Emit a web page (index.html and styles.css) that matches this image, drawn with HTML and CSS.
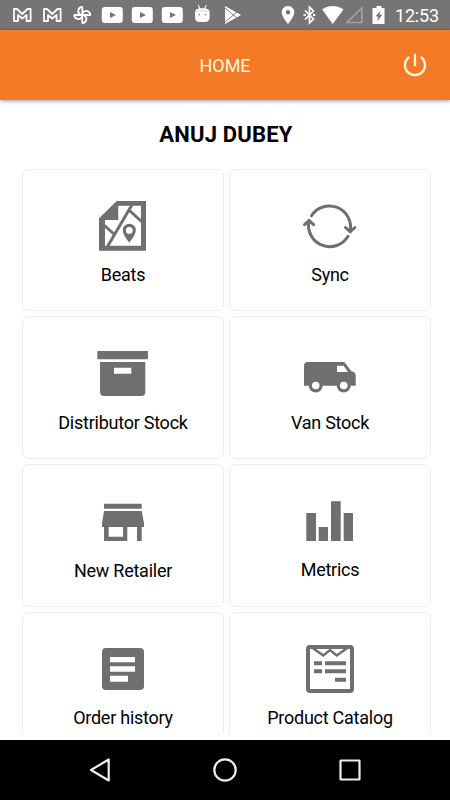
FILE: index.html
```html
<!DOCTYPE html>
<html lang="en">
<head>
  <meta charset="UTF-8">
  <meta name="viewport" content="width=device-width, initial-scale=1">
  <title>Home</title>
  <link rel="stylesheet" href="styles.css">
</head>
<body>
  <div class="status-bar">
    <div class="notifications">
      <svg viewBox="0 0 30 30"><path class="line" d="M7 21V9h3l5.300 5 5.300-5h3v12h-4v-6l-4.300 3.500-4.300-3.500v6z"/></svg>
      <svg viewBox="0 0 30 30"><path class="line" d="M7 21V9h3l5.300 5 5.300-5h3v12h-4v-6l-4.300 3.500-4.300-3.500v6z"/></svg>
      <svg viewBox="0 0 30 30"><path class="line" d="M15.300 15V7a4 4 0 0 0-2 7.500M15.300 15h8a4 4 0 0 0-7.500-2M15.300 15v8a4 4 0 0 0 2-7.500M15.300 15h-8a4 4 0 0 0 7.500 2"/></svg>
      <svg viewBox="0 0 30 30"><rect x="4.800" y="7" width="21" height="16" rx="3"/><path class="cut" d="M13 12l6 3-6 3z"/></svg>
      <svg viewBox="0 0 30 30"><rect x="4.800" y="7" width="21" height="16" rx="3"/><path class="cut" d="M13 12l6 3-6 3z"/></svg>
      <svg viewBox="0 0 30 30"><rect x="4.800" y="7" width="21" height="16" rx="3"/><path class="cut" d="M13 12l6 3-6 3z"/></svg>
      <svg viewBox="0 0 30 30"><path d="M8 12.500q0-3.500 4-4L10.800 5l.8-.3L13.300 8.200h4L18.900 4.700l.8.300L18.600 8.500q4 .5 4 4V17q0 5-4.500 5h-5.600Q8 22 8 17z"/><path class="seam faint" d="M8 11h14.600"/><circle class="cut" cx="12.300" cy="14.800" r=".8"/><circle class="cut" cx="18.500" cy="14.800" r=".8"/></svg>
      <svg viewBox="0 0 30 30"><path d="M8 6l16 9-16 9z"/><path class="seam" d="M8 8l12 10M8 22l12-10"/></svg>
    </div>
    <div class="system">
      <svg viewBox="0 0 22.500 30"><path fill-rule="evenodd" d="M11 6a6.300 6.300 0 0 0-6.300 6.300C4.700 17 11 24 11 24s6.300-7 6.300-11.700A6.300 6.300 0 0 0 11 6zm0 4a2.300 2.300 0 1 1 0 4.600 2.300 2.300 0 0 1 0-4.600z"/></svg>
      <svg viewBox="0 0 22.500 30"><path class="bt" d="M6 10.500l8.500 8.500-4 4V7l4 4L6 19.500"/><path d="M4.500 14h2.200v2H4.500zM14 14h2.200v2H14z"/></svg>
      <svg viewBox="0 0 22.500 30"><path d="M10.700 24L.2 9.500Q4.500 6 10.700 6t10.800 3.500z"/></svg>
      <svg viewBox="0 0 22.500 30"><path class="signal" d="M3 22.500h14.800V8z"/></svg>
      <svg viewBox="0 0 22.500 30"><path d="M9.500 6h5v2h3v16h-12V8h4z"/><path class="cut" d="M13.500 10.500l-5 6h2.700l-1 5 5.200-6.700h-2.900z"/></svg>
      <span class="clock">12:53</span>
    </div>
  </div>

  <header class="app-bar">
    <h1 class="app-title">HOME</h1>
    <button class="power" aria-label="Log out">
      <svg viewBox="0 0 24 24"><path d="M12 1.700v11.500M6.700 4.500a9.300 9.300 0 1 0 10.600 0"/></svg>
    </button>
  </header>

  <main class="content">
    <h2 class="user-name">ANUJ DUBEY</h2>
    <div class="menu">
      <a class="card">
        <svg class="icon" viewBox="0 0 60 60">
          <path fill-rule="evenodd" d="M23.700 6H53v49.700H6V23.300zM25.300 10.700V25H12v25.700h36v-40z"/>
          <path class="road" d="M38.900 10L14.500 51.500M36.500 15.500L48.500 26.500M11.500 30.500L22.500 40.500"/>
          <path fill-rule="evenodd" d="M36.300 28.700a6.500 6.500 0 0 0-6.500 6.500c0 5 6.500 12.300 6.500 12.300s6.500-7.300 6.500-12.300a6.500 6.500 0 0 0-6.500-6.500zm0 3.300a3.400 3.400 0 1 1 0 6.800 3.400 3.400 0 0 1 0-6.800z"/>
        </svg>
        <span class="label">Beats</span>
      </a>
      <a class="card">
        <svg class="icon" viewBox="0 0 60 60">
          <path class="sync" d="M11.500 20.700A21.200 21.200 0 0 1 50.200 36M45.500 32.500l4.700 4.200 4.700-4.200M48 41.200A21.200 21.200 0 0 1 9 26M4.600 29.700l4.500-4.200 4.500 4.200"/>
        </svg>
        <span class="label">Sync</span>
      </a>
      <a class="card">
        <svg class="icon" viewBox="0 0 60 60">
          <rect x="4.300" y="9" width="50.700" height="8.300" rx=".8"/>
          <path fill-rule="evenodd" d="M7 20h45.300v30a4 4 0 0 1-4 4H11a4 4 0 0 1-4-4zM21 25.700v6h17.300v-6z"/>
        </svg>
        <span class="label label-down">Distributor Stock</span>
      </a>
      <a class="card">
        <svg class="icon" viewBox="0 0 60 60">
          <path fill-rule="evenodd" d="M8 20h36.300l7 9.200q4.400.8 4.400 4v10.500H4V24q0-4 4-4zM37 23.700V30h11l-4.300-6.300z"/>
          <circle cx="15.700" cy="43.500" r="7"/><circle cx="43.700" cy="43.500" r="7"/>
          <circle class="hole" cx="15.700" cy="43.500" r="3.800"/><circle class="hole" cx="43.700" cy="43.500" r="3.800"/>
        </svg>
        <span class="label label-down">Van Stock</span>
      </a>
      <a class="card">
        <svg class="icon" viewBox="0 0 60 60">
          <path d="M11 13.700h37.700v5H11zM11 21h37.700L51 33.300V37H9v-3.700z"/>
          <path fill-rule="evenodd" d="M11 36.500h23.300V51H11zM15.700 37v9.700H30V37z"/>
          <path d="M44 36.500h4.700V51H44z"/>
        </svg>
        <span class="label label-down">New Retailer</span>
      </a>
      <a class="card">
        <svg class="icon" viewBox="0 0 60 60">
          <path d="M6.300 23H16v28H6.300zM18.700 37H28v14h-9.300zM31 11.300h9.700V51H31zM43.700 23H53v28h-9.300z"/>
        </svg>
        <span class="label">Metrics</span>
      </a>
      <a class="card">
        <svg class="icon" viewBox="0 0 60 60">
          <rect x="9" y="10" width="42" height="42" rx="4"/>
          <path class="hole" d="M17 19h25v5.300H17zM17 28.200h25v5.600H17zM17 37.800h18v6H17z"/>
        </svg>
        <span class="label">Order history</span>
      </a>
      <a class="card">
        <svg class="icon" viewBox="0 0 60 60">
          <rect class="frame" x="8" y="9" width="44" height="44" rx="2"/>
          <path class="zigzag" d="M13 10.300l10.300 7.200L30 12l6.700 5.500L47 10.300"/>
          <path d="M14 23.300h8v4h-8zM25 23.300h21v4H25zM14 31.300h8v4h-8zM25 31.300h21v4H25zM35 39.700h11v4H35z"/>
        </svg>
        <span class="label">Product Catalog</span>
      </a>
    </div>
  </main>

  <nav class="nav-bar">
    <svg viewBox="0 0 30 30"><path d="M23.700 4.500v21L6 15z"/></svg>
    <svg viewBox="0 0 30 30"><circle cx="15" cy="15" r="10.700"/></svg>
    <svg viewBox="0 0 30 30"><rect x="5.500" y="5.500" width="19" height="19" rx=".5"/></svg>
  </nav>
</body>
</html>
```
FILE: styles.css
```css
* {
  box-sizing: border-box;
}
body {
  margin: 0;
  height: 800px;
  display: flex;
  flex-direction: column;
  overflow: hidden;
  font-family: Roboto, Arial, sans-serif;
  background: #fff;
  color: #000;
}

/* Status bar */
.status-bar {
  flex: none;
  height: 30px;
  display: flex;
  justify-content: space-between;
  padding: 0 11px 0 7px;
  background: #757575;
  color: #fff;
}
.status-bar svg {
  height: 30px;
  fill: #fff;
}
.notifications,
.system {
  display: flex;
}
.notifications svg {
  width: 30px;
}
.system svg {
  width: 22.5px;
}
.status-bar .line {
  fill: none;
  stroke: #fff;
  stroke-width: 1.8;
  stroke-linejoin: round;
}
.status-bar .cut {
  fill: #757575;
}
.status-bar .seam {
  fill: none;
  stroke: #757575;
  stroke-width: 0.9;
}
.status-bar .faint {
  stroke: #d0d0d0;
}
.status-bar .bt {
  fill: none;
  stroke: #fff;
  stroke-width: 1.7;
}
.status-bar .signal {
  fill: none;
  stroke: #a3a3a3;
  stroke-width: 1.7;
}
.clock {
  width: 44px;
  margin-left: 6px;
  font-size: 18px;
  letter-spacing: -0.2px;
  line-height: 31px;
  white-space: nowrap;
}

/* Orange header */
.app-bar {
  flex: none;
  height: 70px;
  display: grid;
  grid-template-columns: 1fr auto 1fr;
  align-items: center;
  padding-right: 22px;
  background: #f47a28;
  box-shadow: 0 1px 4px rgba(0, 0, 0, 0.4);
  z-index: 1;
}
.app-title {
  grid-column: 2;
  margin: 1px 0 0 22px;
  font-size: 18px;
  font-weight: 400;
  color: #fff4dc;
}
.power {
  justify-self: end;
  padding: 0;
  border: none;
  background: none;
}
.power svg {
  display: block;
  width: 26px;
  height: 26px;
  fill: none;
  stroke: #fff4dc;
  stroke-width: 2.1;
}

/* Menu */
.content {
  height: 633px;
  overflow: hidden;
}
.user-name {
  margin: 0;
  padding: 20px 0 0 2px;
  height: 69px;
  font-size: 22px;
  letter-spacing: 0.2px;
  line-height: 29px;
  font-weight: 700;
  text-align: center;
}
.menu {
  display: grid;
  grid-template-columns: 202px 202px;
  grid-template-rows: 142px 143px 143px 143px;
  gap: 5px;
  padding-left: 22px;
}
.card {
  display: flex;
  flex-direction: column;
  align-items: center;
  padding-top: 25px;
  border: 1px solid #ececec;
  border-radius: 7px;
}
.icon {
  flex: none;
  width: 60px;
  height: 60px;
  fill: #6f6f6f;
}
.icon .hole {
  fill: #fff;
}
.icon .road,
.icon .sync,
.icon .zigzag,
.icon .frame {
  fill: none;
  stroke: #6f6f6f;
  stroke-width: 3;
}
.icon .sync {
  stroke-linecap: round;
}
.icon .zigzag {
  stroke-width: 2.5;
}
.icon .frame {
  stroke-width: 4;
}
.label {
  margin-top: 8px;
  font-size: 18px;
  letter-spacing: -0.25px;
  line-height: 24px;
}
.label-down {
  margin-top: 9px;
}

/* Android navigation */
.nav-bar {
  flex: none;
  height: 60px;
  margin-top: auto;
  display: flex;
  justify-content: center;
  align-items: center;
  gap: 95px;
  background: #000;
}
.nav-bar svg {
  width: 30px;
  height: 30px;
  fill: none;
  stroke: #eee;
  stroke-width: 2.2;
  stroke-linejoin: round;
}
```
